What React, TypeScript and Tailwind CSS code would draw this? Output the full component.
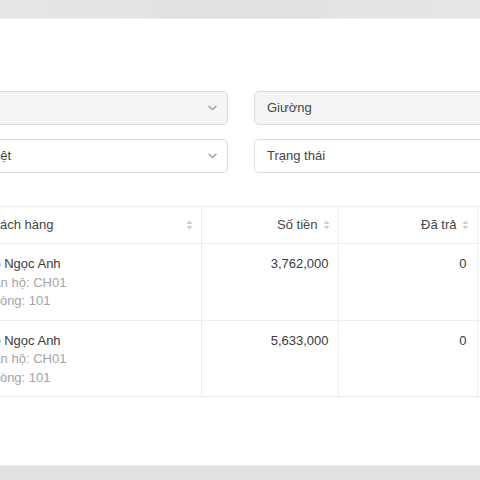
import React from 'react';

const rows = [
  { name: 'Đỗ Ngọc Anh', apt: 'CH01', room: '101', amount: '3,762,000', paid: '0' },
  { name: 'Đỗ Ngọc Anh', apt: 'CH01', room: '101', amount: '5,633,000', paid: '0' },
];

function Chevron() {
  return (
    <svg width="9" height="6" viewBox="0 0 9 6" className="text-[#9a9a9a]">
      <path d="M1 1.2 4.5 4.6 8 1.2" fill="none" stroke="currentColor" strokeWidth="1.3" strokeLinecap="round" />
    </svg>
  );
}

function SortIcon() {
  return (
    <svg width="7" height="10" viewBox="0 0 7 10" className="text-[#cfcfd4] shrink-0">
      <path d="M3.5 0.5 6.5 4H0.5Z M3.5 9.5 6.5 6H0.5Z" fill="currentColor" />
    </svg>
  );
}

function Select({ text, disabled, chevron }: { text: string; disabled?: boolean; chevron?: boolean }) {
  return (
    <div
      className={`h-[34px] flex items-center justify-between rounded-[5px] border border-[#dcdce0] pl-3 pr-[10px] ${
        disabled ? 'bg-[#f5f5f6]' : 'bg-white'
      }`}
    >
      <span className="text-[13px] text-[#454545]">{text}</span>
      {chevron && <Chevron />}
    </div>
  );
}

export default function App() {
  return (
    <div className="w-[480px] h-[480px] overflow-hidden bg-white flex flex-col" style={{ fontFamily: '"Liberation Sans", Arial, sans-serif' }}>
      <div className="h-[19px] shrink-0 bg-gradient-to-r from-[#e6e6e6] via-[#e1e1e1] to-[#e6e6e6] border-b border-[#efefef]" />
      <div className="flex-1 relative">
        <div className="ml-[-24px] w-[600px] pt-[72px] flex flex-col">
          <div className="grid grid-cols-[252px_252px] gap-x-[26px] gap-y-[14px]">
            <Select text="" disabled chevron />
            <Select text="Giường" disabled />
            <Select text="Việt" chevron />
            <Select text="Trạng thái" />
          </div>

          <table className="mt-[33px] border-collapse text-[13px] leading-[18.5px]">
            <thead>
              <tr className="border-y border-[#ececf1]">
                <th className="w-[225px] h-[37px] px-2 font-normal text-[#454545] border-r border-[#ececf1]">
                  <div className="flex items-center justify-between">
                    <span>Khách hàng</span>
                    <SortIcon />
                  </div>
                </th>
                <th className="w-[137px] px-2 font-normal text-[#454545] border-r border-[#ececf1]">
                  <div className="flex items-center justify-end gap-[5px]">
                    <span>Số tiền</span>
                    <SortIcon />
                  </div>
                </th>
                <th className="w-[139px] px-2 font-normal text-[#454545] border-r border-[#ececf1]">
                  <div className="flex items-center justify-end gap-[5px]">
                    <span>Đã trả</span>
                    <SortIcon />
                  </div>
                </th>
                <th className="px-2 font-normal text-[#454545]"></th>
              </tr>
            </thead>
            <tbody>
              {rows.map((r, i) => (
                <tr key={i} className="border-b border-[#ececf1] align-top">
                  <td className="px-2 pt-[11px] pb-[9px] border-r border-[#ececf1]">
                    <div className="text-[#3a3a3a]">{r.name}</div>
                    <div className="text-[#a3a3a8]">Căn hộ: {r.apt}</div>
                    <div className="text-[#a3a3a8]">Phòng: {r.room}</div>
                  </td>
                  <td className="pl-2 pr-[9px] pt-[11px] pb-[9px] text-right text-[#3a3a3a] border-r border-[#ececf1]">{r.amount}</td>
                  <td className="pl-2 pr-[10px] pt-[11px] pb-[9px] text-right text-[#3a3a3a] border-r border-[#ececf1]">{r.paid}</td>
                  <td className="px-2 pt-[11px] pb-[9px]"></td>
                </tr>
              ))}
            </tbody>
          </table>
        </div>
      </div>
      <div className="h-[15px] shrink-0 bg-[#e2e2e2] border-t border-[#ebebeb]" />
    </div>
  );
}
